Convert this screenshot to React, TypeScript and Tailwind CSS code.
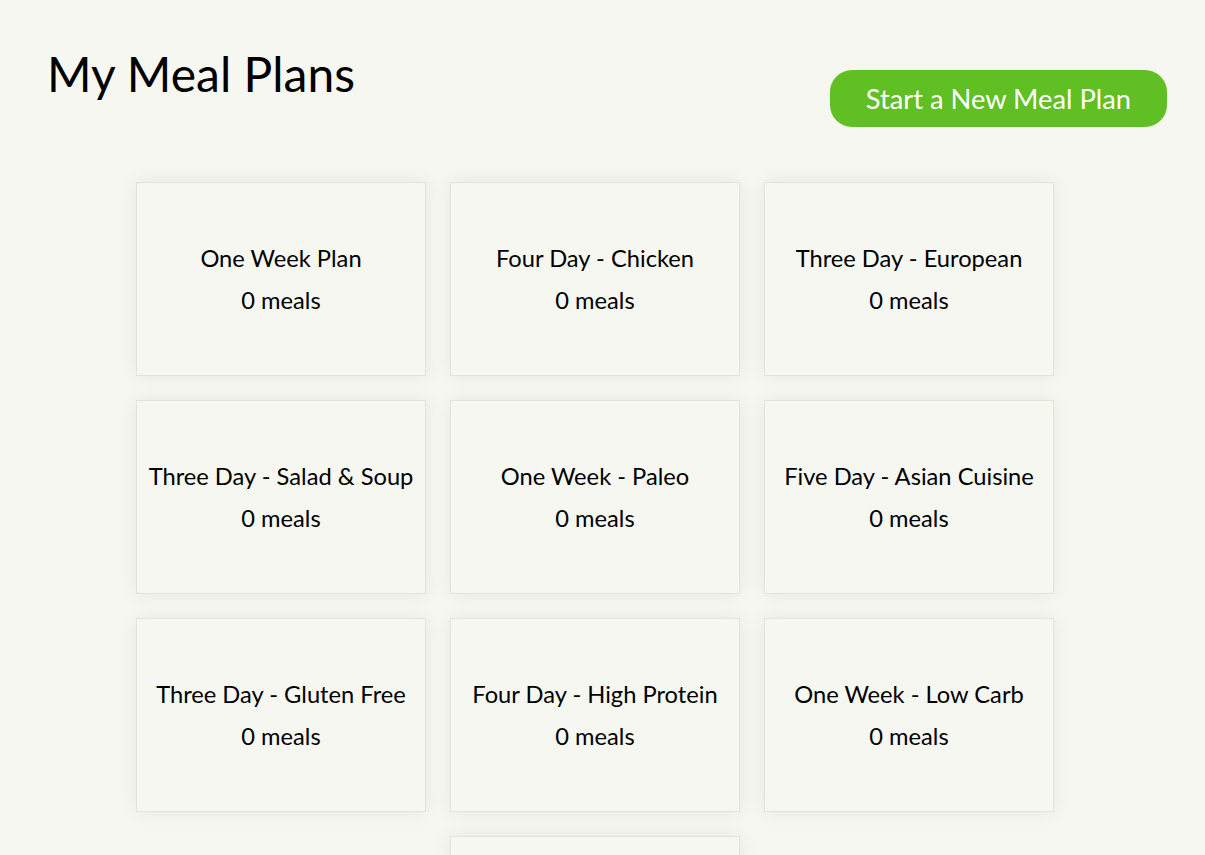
import React from "react";

const plans = [
  "One Week Plan",
  "Four Day - Chicken",
  "Three Day - European",
  "Three Day - Salad & Soup",
  "One Week - Paleo",
  "Five Day - Asian Cuisine",
  "Three Day - Gluten Free",
  "Four Day - High Protein",
  "One Week - Low Carb",
];

const PlanCard = ({ name }: { name?: string }) => {
  return (
    <div className="w-[290px] h-[194px] flex flex-col items-center justify-center border border-[#e3e5d3] bg-[#f7f7f2] shadow-[0_0_18px_rgba(0,0,0,0.07)] text-[23.7px] leading-[42px] text-black">
      {name && (
        <>
          <div>{name}</div>
          <div>0 meals</div>
        </>
      )}
    </div>
  );
};

const App = () => {
  return (
    <div className="h-[855px] bg-[#f7f7f2] font-['Lato',sans-serif] text-black overflow-hidden">
      <div className="flex items-start justify-between pl-[47px] pr-[38px] pt-[44px]">
        <h1 className="text-[48px] leading-[60px]">My Meal Plans</h1>
        <button className="mt-[26px] h-[57px] px-[36px] rounded-[22px] bg-[#5fbf23] text-white text-[27.3px] leading-[55px]">
          Start a New Meal Plan
        </button>
      </div>
      <div className="mt-[55px] ml-[136px] w-[918px] flex flex-wrap justify-center gap-6">
        {plans.map((p) => (
          <PlanCard key={p} name={p} />
        ))}
        {/* next plan card, scrolled below the fold */}
        <PlanCard />
      </div>
    </div>
  );
};

export default App;
